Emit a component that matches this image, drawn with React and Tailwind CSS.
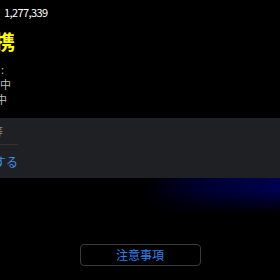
export default function App() {
  const jp = { fontFamily: '"Noto Sans CJK JP", "Noto Sans", sans-serif' };
  return (
    <div className="w-[280px] h-[280px] bg-black overflow-hidden flex flex-col" style={jp}>
      <div className="h-[24px] flex items-center pl-[4px] text-[11px] tracking-[-0.6px] text-white">1,277,339</div>
      <div className="h-[28px] flex items-end">
        <span className="ml-[-25px] text-[20px] font-bold leading-none text-[#ffff00] whitespace-nowrap">連携</span>
      </div>
      <div className="mt-[10px] h-[15px] flex items-center text-[11px] text-[#bdbdbd] whitespace-nowrap">
        <span className="ml-[-54px]">ステータス:</span>
      </div>
      <div className="h-[15px] flex items-center text-[11px] text-[#bdbdbd] whitespace-nowrap">
        <span className="ml-[-22px]">処理中</span>
      </div>
      <div className="h-[15px] flex items-center text-[11px] text-[#bdbdbd] whitespace-nowrap">
        <span className="ml-[-26px]">待機中</span>
      </div>
      <div className="mt-[11px] h-[60px] bg-[#1f2024] flex flex-col">
        <div className="h-[26px] flex items-center text-[11px] text-[#8a8a8a] whitespace-nowrap">
          <span className="ml-[-52px]">注意事項等</span>
        </div>
        <div className="w-[18px] h-px bg-[#3b2b2e]" />
        <div className="flex-1 flex items-center text-[12px] text-[#3d8fe8] whitespace-nowrap">
          <span className="ml-[-30px]">連携する</span>
        </div>
      </div>
      <div className="h-[36px] bg-[linear-gradient(to_right,transparent_50%,#000030_72%,#000050)]">
        <div className="h-full bg-[linear-gradient(to_bottom,transparent_35%,#000)]" />
      </div>
      <div className="mt-[30px] flex justify-center">
        <button className="w-[121px] h-[22px] border border-[#3a3a3a] rounded-[4px] text-[12px] text-[#2f80f0] flex items-center justify-center">
          注意事項
        </button>
      </div>
    </div>
  );
}
